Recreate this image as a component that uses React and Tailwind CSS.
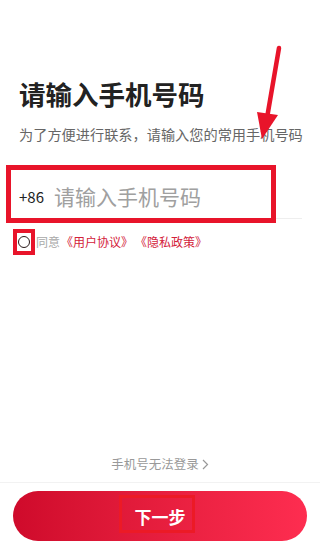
export default function App() {
  return (
    <div
      className="relative w-[320px] h-[550px] bg-white flex flex-col overflow-hidden"
      style={{ fontFamily: '"Noto Sans CJK SC", "Noto Sans", sans-serif' }}
    >
      <div className="px-[19px] pt-[78px]">
        <h1 className="text-[26.5px] font-semibold leading-[32px] text-[#222]">请输入手机号码</h1>
        <p className="mt-[14px] text-[14.2px] leading-[20px] text-[#666] whitespace-nowrap">
          为了方便进行联系，请输入您的常用手机号码
        </p>
      </div>

      <div className="relative mt-[31px] ml-[19px] mr-[18px] h-[44px] flex items-center border-b border-[#eeeeee]">
        <span className="text-[15px] text-[#222] leading-none">+86</span>
        <span className="ml-[10px] text-[21px] text-[#a0a0a0] leading-none">请输入手机号码</span>
        <div className="absolute left-[-13px] top-[-10px] w-[270px] h-[58px] border-[5px] border-[#e8142a]" />
      </div>

      <div className="mt-[12px] ml-[18px] h-[22px] flex items-center text-[12px] leading-none">
        <div className="relative w-[12px] h-[12px]">
          <div className="w-[12px] h-[12px] rounded-full border-[1.5px] border-[#2a1a1a]" />
          <div className="absolute left-[-5px] top-[-7px] w-[22px] h-[26px] border-[4px] border-[#e8142a]" />
        </div>
        <span className="ml-[6px] text-[#a8a8a8]">同意</span>
        <span className="ml-[1px] text-[#d3213a]">《用户协议》</span>
        <span className="ml-[2px] text-[#d3213a]">《隐私政策》</span>
      </div>

      <div className="mt-auto flex flex-col">
        <div className="h-[18px] flex items-center justify-center text-[12.5px] text-[#999]">
          <span>手机号无法登录</span>
          <svg width="7" height="11" viewBox="0 0 7 11" className="ml-[3px]">
            <path d="M1 1 L5.5 5.5 L1 10" fill="none" stroke="#999" strokeWidth="1.2" />
          </svg>
        </div>
        <div className="mt-[9px] border-t border-[#f2f2f2]" />
        <div className="relative mt-[8px] mb-[9px] mx-[13px] h-[50px] rounded-full bg-gradient-to-r from-[#cf0a2b] to-[#fe2d50] flex items-center justify-center">
          <span className="text-[17px] font-bold text-white leading-none">下一步</span>
          <div className="absolute left-[106px] top-[4px] w-[76px] h-[38px] border-[3px] border-[#ec1a26]" />
        </div>
      </div>

      <svg
        className="absolute left-0 top-0 pointer-events-none"
        width="320"
        height="550"
        viewBox="0 0 320 550"
      >
        <line x1="279" y1="48" x2="267" y2="118" stroke="#e8142a" strokeWidth="4.5" strokeLinecap="round" />
        <polygon points="257,112 278,115 262,139" fill="#e8142a" />
      </svg>
    </div>
  );
}
